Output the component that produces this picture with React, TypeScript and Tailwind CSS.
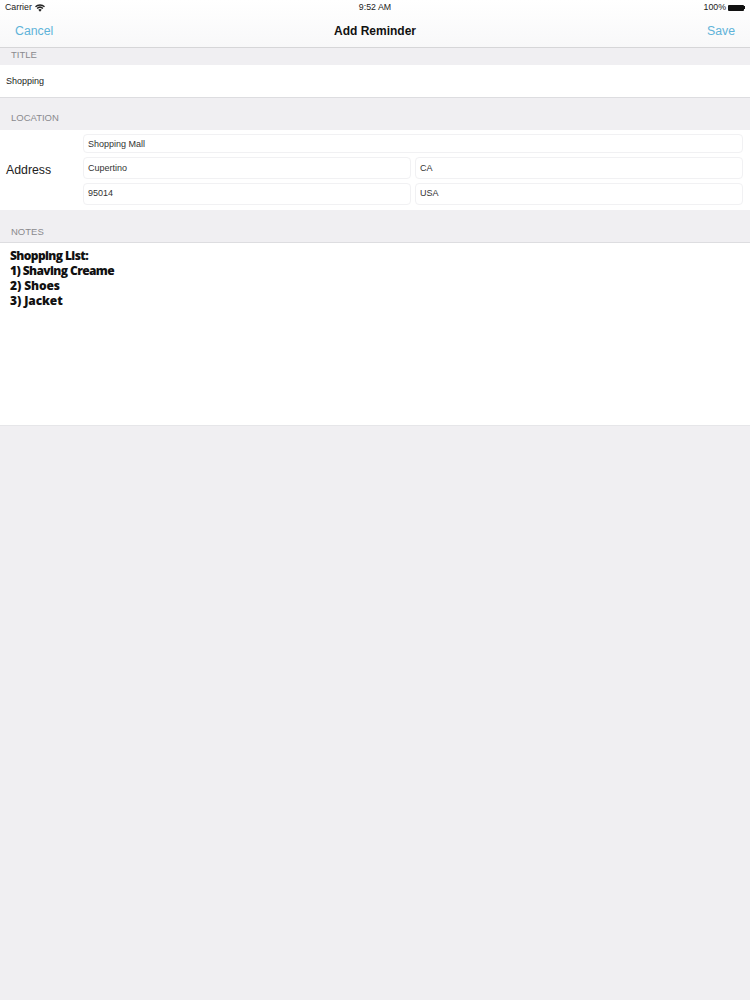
const sans = "font-['Liberation_Sans',Arial,sans-serif]";

function Field({ text, className = "" }: { text: string; className?: string }) {
  return (
    <div className={`flex items-center rounded-[4px] border border-[#f1f1f3] bg-white pl-[4px] text-[9px] text-[#333] ${className}`}>
      {text}
    </div>
  );
}

function SectionLabel({ text, className = "" }: { text: string; className?: string }) {
  return (
    <div className={`flex shrink-0 items-center bg-[#f0eff2] pl-[11px] text-[9.5px] text-[#8a8a8e] ${className}`}>
      {text}
    </div>
  );
}

function Wifi() {
  return (
    <svg width="10" height="8" viewBox="0 0 20 15" fill="#222">
      <path d="M10 15 L6.6 11.2 A5 5 0 0 1 13.4 11.2 Z" />
      <path d="M5.2 9.6 L3.2 7.4 A10 10 0 0 1 16.8 7.4 L14.8 9.6 A7.2 7.2 0 0 0 5.2 9.6 Z" />
      <path d="M1.9 6 L0 3.9 A14.5 14.5 0 0 1 20 3.9 L18.1 6 A12 12 0 0 0 1.9 6 Z" />
    </svg>
  );
}

export default function App() {
  return (
    <div className={`${sans} flex h-[1000px] w-[750px] flex-col overflow-hidden bg-[#f0eff2]`}>
      {/* nav bar with status bar on top */}
      <div className="h-[48px] shrink-0 border-b border-[#d6d6d8] bg-linear-to-b from-white to-[#f8f8f9]">
        <div className="grid h-[15px] grid-cols-3 items-center px-[5px] text-[8.8px] text-[#222]">
          <div className="flex items-center gap-[3px]">
            Carrier <Wifi />
          </div>
          <div className="text-center">9:52 AM</div>
          <div className="flex items-center justify-end gap-[2px]">
            100%
            <div className="flex items-center">
              <div className="h-[6px] w-[16px] rounded-[1px] bg-[#111]" />
              <div className="h-[3px] w-[1px] bg-[#111]" />
            </div>
          </div>
        </div>
        <div className="grid h-[32px] grid-cols-3 items-center px-[15px] text-[12.3px]">
          <span className="text-[#5fb3d9]">Cancel</span>
          <span className="text-center text-[12px] font-bold text-[#111]">Add Reminder</span>
          <span className="text-right text-[#5fb3d9]">Save</span>
        </div>
      </div>

      <SectionLabel text="TITLE" className="h-[17px] pb-[2px]" />
      <div className="flex h-[33px] shrink-0 items-center border-b border-[#dddde0] bg-white pl-[6px] pt-[1px] text-[9px] text-[#222]">
        Shopping
      </div>

      <SectionLabel text="LOCATION" className="h-[32px] pt-[9px]" />
      <div className="flex h-[80px] shrink-0 bg-white">
        <div className="flex w-[83px] shrink-0 items-center pl-[6px] pt-[1px] text-[12.3px] text-[#222]">Address</div>
        <div className="flex flex-1 flex-col pr-[7px] pt-[4px]">
          <Field text="Shopping Mall" className="h-[19px] pt-[2px]" />
          <div className="mt-[4px] grid h-[22px] grid-cols-2 gap-[4px]">
            <Field text="Cupertino" className="pt-[1px]" />
            <Field text="CA" className="pt-[1px]" />
          </div>
          <div className="mt-[4px] grid h-[22px] grid-cols-2 gap-[4px]">
            <Field text="95014" />
            <Field text="USA" />
          </div>
        </div>
      </div>

      <SectionLabel text="NOTES" className="h-[33px] border-b border-[#dddde0] pt-[13px]" />
      <div className="h-[183px] shrink-0 border-b border-[#e6e6e9] bg-white pl-[10px] pt-[5px] font-['Open_Sans',cursive] text-[12px] font-extrabold leading-[15px] tracking-[-0.6px] text-[#111]">
        <div>Shopping List:</div>
        <div>1) Shaving Creame</div>
        <div className="tracking-[-0.1px]">2) Shoes</div>
        <div className="tracking-[-0.1px]">3) Jacket</div>
      </div>
    </div>
  );
}
